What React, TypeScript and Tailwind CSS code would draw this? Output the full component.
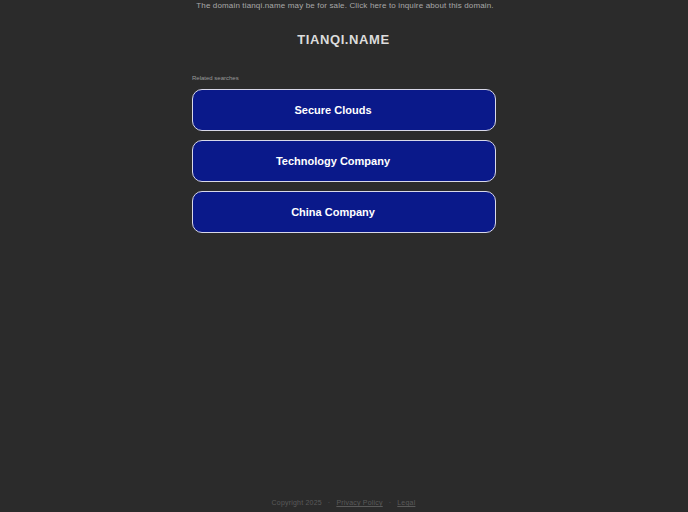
export default function App() {
  const items = ["Secure Clouds", "Technology Company", "China Company"];
  return (
    <div className="w-[688px] h-[512px] bg-[#2b2b2b] flex flex-col items-center overflow-hidden" style={{ fontFamily: '"Liberation Sans", Arial, sans-serif' }}>
      <div className="h-[11px] ml-[2px] text-[8px] leading-[11px] tracking-[0.15px] text-[#a8a8a8]">The domain tianqi.name may be for sale. Click here to inquire about this domain.</div>
      <div className="mt-[21px] ml-[-1px] h-[16px] text-[13px] leading-[16px] font-bold tracking-[0.6px] text-[#dcdcdc]">TIANQI.NAME</div>
      <div className="mt-[26px] w-[304px] flex flex-col">
        <div className="text-[6px] leading-[8px] text-[#9a9a9a] mb-[7px]">Related searches</div>
        <div className="flex flex-col gap-[9px]">
          {items.map((t) => (
            <div key={t} className="h-[42px] rounded-[10px] border border-[#d8d8e8] bg-[#0a198a] flex items-center justify-center pr-[22px] text-white text-[11px] font-bold">
              {t}
            </div>
          ))}
        </div>
      </div>
      <div className="flex-1" />
      <div className="mb-[4px] ml-[-1px] h-[10px] text-[7px] leading-[10px] tracking-[0.2px] text-[#5a5a5a] flex gap-[6px]">
        <span>Copyright 2025</span>
        <span>·</span>
        <span className="underline">Privacy Policy</span>
        <span>·</span>
        <span className="underline">Legal</span>
      </div>
    </div>
  );
}
